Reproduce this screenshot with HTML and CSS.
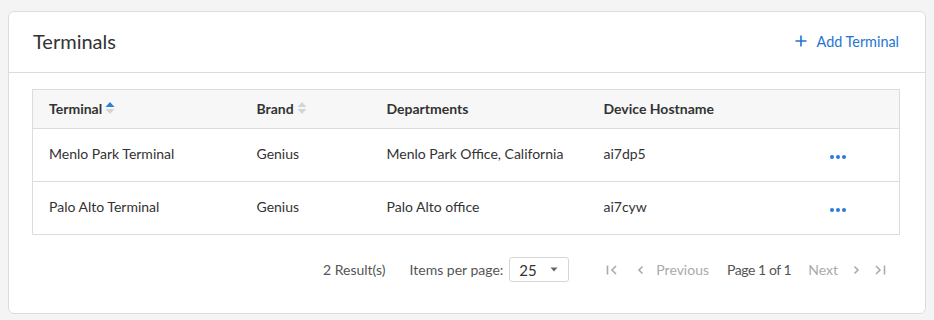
FILE: index.html
```html
<!DOCTYPE html>
<html>
<head>
<meta charset="utf-8">
<link rel="stylesheet" href="styles.css">
</head>
<body>
<div class="card">
  <div class="card-header">
    <h1 class="title">Terminals</h1>
    <a class="add-link" href="#">
      <svg class="plus" width="12" height="12" viewBox="0 0 12 12"><path d="M6 0.5v11M0.5 6h11" stroke="currentColor" stroke-width="1.6" fill="none"/></svg>
      <span>Add Terminal</span>
    </a>
  </div>
  <div class="card-body">
    <table class="grid">
      <thead>
        <tr>
          <th class="c1"><span class="th-inner">Terminal<span class="sort"><svg width="10" height="14" viewBox="0 0 10 14"><path d="M5 1L9.5 6H0.5Z" fill="#2f7fd6"/><path d="M5 13L9.5 8H0.5Z" fill="#d4d4d4"/></svg></span></span></th>
          <th class="c2"><span class="th-inner">Brand<span class="sort"><svg width="10" height="14" viewBox="0 0 10 14"><path d="M5 1L9.5 6H0.5Z" fill="#d4d4d4"/><path d="M5 13L9.5 8H0.5Z" fill="#d4d4d4"/></svg></span></span></th>
          <th class="c3">Departments</th>
          <th class="c4">Device Hostname</th>
          <th class="c5"></th>
        </tr>
      </thead>
      <tbody>
        <tr>
          <td>Menlo Park Terminal</td>
          <td>Genius</td>
          <td>Menlo Park Office, California</td>
          <td>ai7dp5</td>
          <td><span class="dots"><i></i><i></i><i></i></span></td>
        </tr>
        <tr>
          <td>Palo Alto Terminal</td>
          <td>Genius</td>
          <td>Palo Alto office</td>
          <td>ai7cyw</td>
          <td><span class="dots"><i></i><i></i><i></i></span></td>
        </tr>
      </tbody>
    </table>
    <div class="pager">
      <span class="results">2 Result(s)</span>
      <span class="ipp">Items per page:</span>
      <span class="select"><span>25</span><svg width="8" height="5" viewBox="0 0 8 5"><path d="M0.5 0.5h7L4 4.5Z" fill="#666"/></svg></span>
      <span class="nav">
        <svg class="ico first" width="12" height="12" viewBox="0 0 12 12"><path d="M1.5 1.5v9" stroke="#aaa" stroke-width="1.6"/><path d="M10 2L6 6l4 4" stroke="#aaa" stroke-width="1.6" fill="none"/></svg>
        <span class="prev"><svg class="ico" width="7" height="10" viewBox="0 0 7 10"><path d="M5.5 1.5L2 5l3.5 3.5" stroke="#aaa" stroke-width="1.6" fill="none"/></svg><span class="dis">Previous</span></span>
        <span class="page">Page 1 of 1</span>
        <span class="next"><span class="dis">Next</span><svg class="ico" width="7" height="10" viewBox="0 0 7 10"><path d="M1.5 1.5L5 5 1.5 8.5" stroke="#aaa" stroke-width="1.6" fill="none"/></svg></span>
        <svg class="ico last" width="12" height="12" viewBox="0 0 12 12"><path d="M2 2l4 4-4 4" stroke="#aaa" stroke-width="1.6" fill="none"/><path d="M10.5 1.5v9" stroke="#aaa" stroke-width="1.6"/></svg>
      </span>
    </div>
  </div>
</div>
</body>
</html>
```
FILE: styles.css
```css
* { box-sizing: border-box; }
html, body { margin: 0; padding: 0; }
body {
  background: #f4f4f4;
  font-family: Lato, "Open Sans", sans-serif;
  color: #333;
  padding: 11px 8px 0 8px;
}
.card {
  background: #fff;
  border: 1px solid #dcdcdc;
  border-radius: 6px;
  height: 303px;
}
.card-header {
  height: 61px;
  border-bottom: 1px solid #dcdcdc;
  display: flex;
  align-items: center;
  justify-content: space-between;
  padding: 0 26px 2px 24px;
}
.title {
  margin: 0;
  font-size: 20px;
  font-weight: 400;
  color: #333;
}
.add-link {
  color: #1f74d4;
  text-decoration: none;
  display: flex;
  align-items: center;
  gap: 10px;
  font-size: 14.4px;
}
.plus { display: block; }
.card-body {
  padding: 16px 25px 0 23px;
}
.grid {
  width: 100%;
  border-collapse: collapse;
  border: 1px solid #dcdcdc;
  table-layout: fixed;
  font-size: 14px;
}
.grid th {
  background: #f7f7f7;
  height: 39px;
  text-align: left;
  font-weight: 700;
  padding: 0 0 2px 16px;
  border-bottom: 1px solid #dcdcdc;
  color: #333;
}
.grid td {
  height: 53px;
  padding: 0 0 3px 16px;
  border-bottom: 1px solid #dcdcdc;
  color: #333;
}
.c1 { width: 208px; }
.c2 { width: 130px; }
.c3 { width: 217px; }
.c4 { width: 226px; }
.th-inner { display: inline-flex; align-items: center; gap: 3px; }
.sort svg { display: block; }
.dots { display: inline-flex; gap: 2px; }
.dots i {
  width: 4px; height: 4px; border-radius: 50%;
  background: #2a7bd6; display: block;
}
.pager {
  display: flex;
  justify-content: flex-end;
  align-items: center;
  height: 69px;
  font-size: 14px;
  color: #555;
  padding-right: 14px;
}
.results { margin-right: 24px; }
.ipp { margin-right: 6px; }
.select {
  width: 60px; height: 25px;
  border: 1px solid #d6d6d6;
  border-radius: 3px;
  display: flex; align-items: center; justify-content: space-between;
  padding: 0 10px 0 9px;
  font-size: 15px;
  color: #333;
  margin-right: 37px;
}
.select svg { display: block; }
.nav { display: flex; align-items: center; }
.ico { display: block; }
.first { margin-right: 19px; }
.prev { display: flex; align-items: center; gap: 12px; margin-right: 18px; }
.page { color: #555; margin-right: 17px; letter-spacing: -0.45px; }
.next { display: flex; align-items: center; gap: 15px; margin-right: 14px; }
.dis { color: #aaa; }
```
